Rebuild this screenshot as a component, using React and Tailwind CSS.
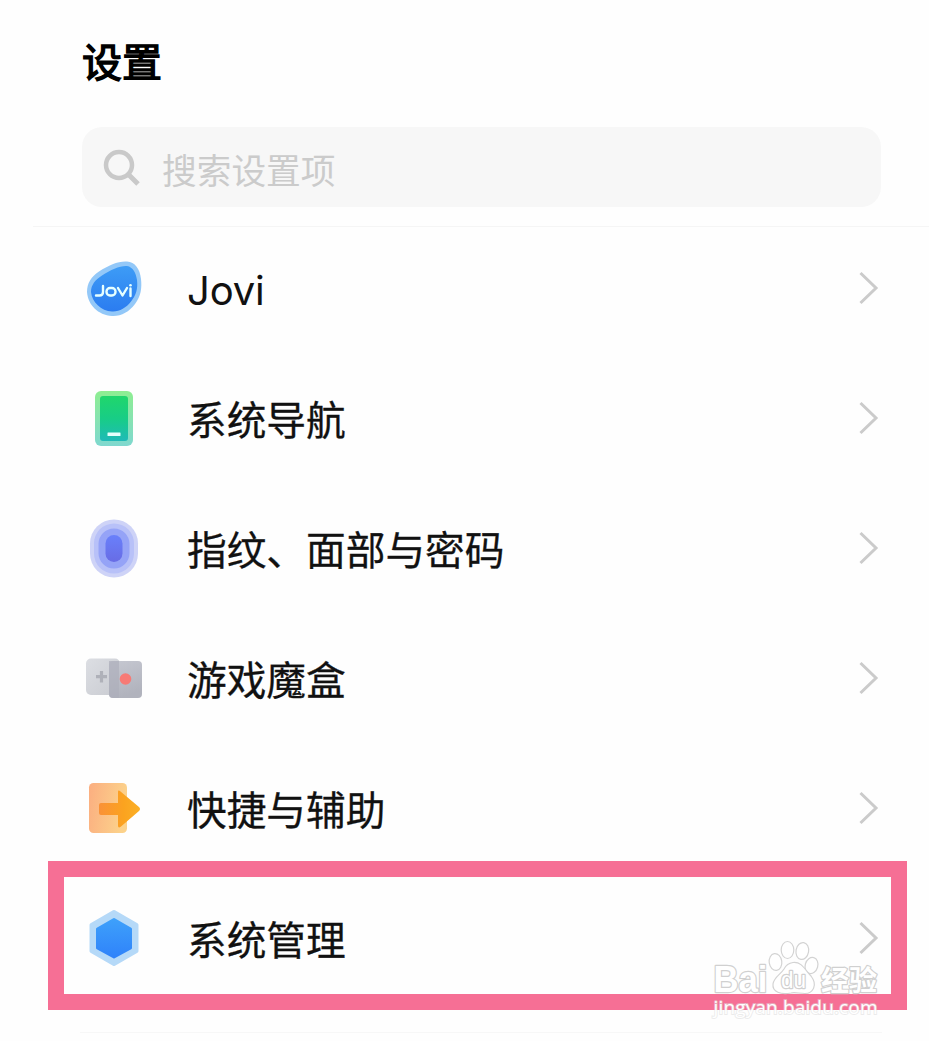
import React from "react";

function JoviIcon() {
  return (
    <svg className="h-[60px] w-[60px]" viewBox="0 0 60 60">
      <defs>
        <linearGradient id="jovi" x1="0" y1="0" x2="0" y2="1">
          <stop offset="0" stopColor="#3d9cf6" />
          <stop offset="1" stopColor="#2b7cf0" />
        </linearGradient>
      </defs>
      <path d="M43 2.500C51 3 56 10 57 20C58 29 57 37 51 45C45 53 37 57.500 28 57C14 56 4 46 3 33C3 24 7 18 15 12.500C25 6 34 2 43 2.500Z" fill="#93c8f8" />
      <path d="M43 7C49 8 52 14 53 21C54 30 52 36 47 42.500C42 49 35 53 28 52.500C17 52 8 43 7 33C7 26 11 21 18 16.500C27 10.500 36 6.500 43 7Z" fill="url(#jovi)" />
      <g fill="none" stroke="#e6ffff" strokeWidth="2.400" strokeLinecap="round" strokeLinejoin="round">
        <path d="M19 27V33Q19 36.500 15.500 36.500H12" />
        <rect x="22.500" y="29" width="9" height="7.500" rx="3.500" />
        <path d="M34 29L38.500 36.500L43 29M46.500 29.500V37" />
      </g>
      <circle cx="46.500" cy="26.300" r="1.300" fill="#e6ffff" />
    </svg>
  );
}

function PhoneIcon() {
  return (
    <svg className="h-[60px] w-[60px]" viewBox="0 0 60 60">
      <defs>
        <linearGradient id="phone-edge" x1="0" y1="0" x2="0" y2="1">
          <stop offset="0" stopColor="#8eee91" />
          <stop offset="1" stopColor="#7fd8cf" />
        </linearGradient>
        <linearGradient id="phone-face" x1="0" y1="0" x2="0" y2="1">
          <stop offset="0" stopColor="#20d66b" />
          <stop offset="0.500" stopColor="#18cd86" />
          <stop offset="1" stopColor="#1fbab8" />
        </linearGradient>
      </defs>
      <rect x="11" y="2" width="38" height="55" rx="6" fill="url(#phone-edge)" />
      <rect x="16" y="7" width="28" height="45" rx="3" fill="url(#phone-face)" />
      <rect x="23.500" y="43.500" width="13" height="3.500" rx="0.500" fill="#e4fffc" />
    </svg>
  );
}

function FingerprintIcon() {
  return (
    <svg className="h-[60px] w-[60px]" viewBox="0 0 60 60">
      <defs>
        <linearGradient id="finger" x1="0" y1="0" x2="0" y2="1">
          <stop offset="0" stopColor="#6980fb" />
          <stop offset="1" stopColor="#686ce5" />
        </linearGradient>
      </defs>
      <rect x="6" y="0.500" width="48" height="58" rx="24" fill="#ced3f7" />
      <rect x="10" y="4.500" width="40" height="50" rx="20" fill="#b8c1f8" />
      <rect x="14.500" y="9.500" width="31" height="40" rx="15.500" fill="#95a3f7" />
      <rect x="21.500" y="16" width="17" height="27" rx="8.500" fill="url(#finger)" />
    </svg>
  );
}

function GameIcon() {
  return (
    <svg className="h-[60px] w-[60px]" viewBox="0 0 60 60">
      <defs>
        <linearGradient id="pad-left" x1="0" y1="0" x2="1" y2="1">
          <stop offset="0" stopColor="#dcdee3" />
          <stop offset="1" stopColor="#c9cbd1" />
        </linearGradient>
        <linearGradient id="pad-right" x1="0" y1="0" x2="0.300" y2="1">
          <stop offset="0" stopColor="#c6c8d1" />
          <stop offset="1" stopColor="#b1b3bd" />
        </linearGradient>
      </defs>
      <rect x="2" y="9.500" width="34" height="36.500" rx="5" fill="url(#pad-left)" />
      <rect x="25" y="12" width="33" height="37" rx="4" fill="url(#pad-right)" />
      <path d="M25 12H35V49H29Q25 49 25 45Z" fill="#acaeba" opacity="0.650" />
      <path d="M17.500 22V33.500M12 27.700H23" stroke="#afb1b9" strokeWidth="3.200" fill="none" />
      <circle cx="41.500" cy="30" r="5.800" fill="#f77a75" />
    </svg>
  );
}

function ShortcutIcon() {
  return (
    <svg className="h-[60px] w-[60px]" viewBox="0 0 60 60">
      <defs>
        <linearGradient id="card" x1="0" y1="0" x2="1" y2="0.200">
          <stop offset="0" stopColor="#fbae80" />
          <stop offset="1" stopColor="#fcd28b" />
        </linearGradient>
        <linearGradient id="arrow" x1="0" y1="0" x2="1" y2="0">
          <stop offset="0" stopColor="#fa9137" />
          <stop offset="0.600" stopColor="#fba31f" />
          <stop offset="1" stopColor="#fbb026" />
        </linearGradient>
      </defs>
      <rect x="5" y="4" width="38" height="50" rx="4.500" fill="url(#card)" />
      <path d="M17 24H34V13Q34 10.500 36.500 12.500L55 28Q57 30 55 32L37 47.500Q34 50 34 46.500V36H17Q15 36 15 34V26Q15 24 17 24Z" fill="url(#arrow)" />
    </svg>
  );
}

function HexagonIcon() {
  return (
    <svg className="h-[60px] w-[60px]" viewBox="0 0 60 60">
      <defs>
        <linearGradient id="hex" x1="0" y1="0" x2="0" y2="1">
          <stop offset="0" stopColor="#3ea0fb" />
          <stop offset="1" stopColor="#2f83fa" />
        </linearGradient>
      </defs>
      <path d="M30 3L52.500 16V42L30 55L7.500 42V16Z" fill="#b5d9f8" stroke="#b5d9f8" strokeWidth="4" strokeLinejoin="round" />
      <path d="M30 10.500L46.500 20V39L30 48L13.500 39V20Z" fill="url(#hex)" stroke="url(#hex)" strokeWidth="3" strokeLinejoin="round" />
    </svg>
  );
}

function Chevron() {
  return (
    <svg className="mb-0.5 ml-auto h-[36px] w-[24px]" viewBox="0 0 24 36" fill="none">
      <path d="M3.500 3L19 18L3.500 33" stroke="#cbcbcb" strokeWidth="3" />
    </svg>
  );
}

function Watermark() {
  return (
    <svg className="absolute top-[62px] left-[704px] h-[90px] w-[184px]" viewBox="0 0 184 90">
      <g fill="#fff" stroke="#d3d3d3" strokeWidth="1.200">
        <ellipse cx="71.500" cy="26" rx="6.300" ry="8.500" transform="rotate(-8 71.500 26)" />
        <ellipse cx="83.500" cy="14" rx="6.300" ry="8.500" />
        <ellipse cx="98.300" cy="15" rx="6.300" ry="8.500" transform="rotate(10 98.300 15)" />
        <ellipse cx="107.500" cy="29.500" rx="6.300" ry="8.200" transform="rotate(16 107.500 29.500)" />
        <path d="M89 26.500C98 25.500 101 34 107 40C114 49 109 57.500 101 57.500C95 57.500 91 56 87 57C77 59 68 56 69 48C70 41 77 38 80 33C82 29 85 27 89 26.500Z" />
      </g>
      <g fill="#fff" stroke="#d0d0d0" strokeLinejoin="round" paintOrder="stroke">
        <text x="9.500" y="56" fontSize="36" fontFamily="Liberation Sans, sans-serif" fontWeight="bold" strokeWidth="2.400" textLength="54" lengthAdjust="spacingAndGlyphs">Bai</text>
        <text x="77" y="51.500" fontSize="24" fontFamily="Liberation Sans, sans-serif" strokeWidth="2.600" textLength="25" lengthAdjust="spacingAndGlyphs">du</text>
        <text x="117" y="54.500" fontSize="28.500" fontWeight="bold" fontFamily="Noto Sans CJK SC, sans-serif" strokeWidth="2.400" textLength="56" lengthAdjust="spacingAndGlyphs">经验</text>
      </g>
      <text x="9.500" y="77.500" fontSize="19" fontFamily="Open Sans, sans-serif" fill="#fff" stroke="#dcdcdc" strokeOpacity="0.550" strokeWidth="1.800" paintOrder="stroke" textLength="164" lengthAdjust="spacing">jingyan.baidu.com</text>
    </svg>
  );
}

const items = [
  { label: "Jovi", Icon: JoviIcon, latin: true },
  { label: "系统导航", Icon: PhoneIcon },
  { label: "指纹、面部与密码", Icon: FingerprintIcon },
  { label: "游戏魔盒", Icon: GameIcon },
  { label: "快捷与辅助", Icon: ShortcutIcon },
  { label: "系统管理", Icon: HexagonIcon, highlighted: true },
];

export default function App() {
  return (
    <main className="h-[1041px] w-[929px] overflow-hidden bg-[#fefefe] font-['Noto_Sans_CJK_SC',sans-serif] text-[#111]">
      <header className="flex h-[226px] flex-col pt-[30px] pl-[82px]">
        <h1 className="h-[60px] text-[40px] leading-[60px] font-normal text-black [-webkit-text-stroke:1.4px_#000]">设置</h1>
        <div className="mt-[37px] flex h-20 w-[799px] items-center rounded-[20px] bg-[#f7f7f7] pl-5">
          <svg className="h-10 w-10" viewBox="0 0 40 40" fill="none" stroke="#c9c9c9">
            <circle cx="17" cy="18" r="13" strokeWidth="4.500" />
            <path d="M26.500 27.500L36 37" strokeWidth="5" />
          </svg>
          <span className="mt-1 ml-5 text-[34.7px] leading-[50px] text-[#cbcbcb]">搜索设置项</span>
        </div>
      </header>
      <div className="ml-[33px] h-px bg-[#f5f5f5]" />
      <ul className="-mt-[3px]">
        {items.map(({ label, Icon, latin, highlighted }) => (
          <li key={label} className="relative flex h-[130px] items-center pr-[48px] pl-[84px]">
            <Icon />
            <span className={latin ? "ml-[43px] pt-1 font-[Inter,sans-serif] text-[40px] leading-[60px] tracking-[-0.2px]" : "mb-0.5 ml-[43px] text-[39.7px] leading-[60px] [-webkit-text-stroke:0.3px_#111]"}>
              {label}
            </span>
            <Chevron />
            {highlighted && (
              <>
                <div className="absolute -top-[13px] left-[48px] h-[149px] w-[859px] border-[16px] border-[#f66f95]" />
                <Watermark />
              </>
            )}
          </li>
        ))}
      </ul>
      <div className="mt-[28px] ml-[80px] h-px w-[802px] bg-[#f7f7f7]" />
    </main>
  );
}
